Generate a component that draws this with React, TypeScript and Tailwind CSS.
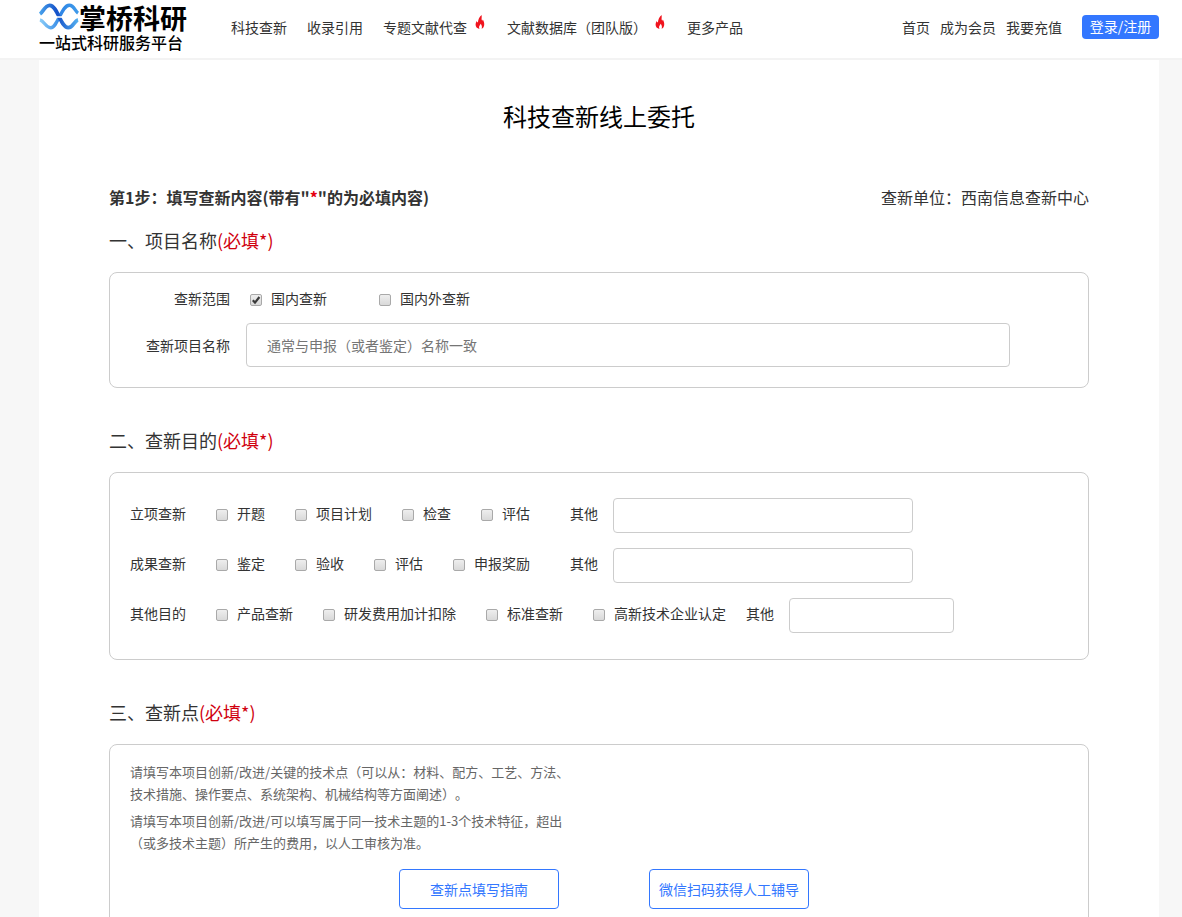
import React from "react";

function Wave() {
  return (
    <svg className="mt-0.5" width="41" height="29" viewBox="0 0 41 29" fill="none" aria-hidden="true">
      <defs>
        <linearGradient id="wa" x1="0" y1="0" x2="41" y2="0" gradientUnits="userSpaceOnUse">
          <stop offset="0" stopColor="#4aa6ee" />
          <stop offset="0.45" stopColor="#1450c8" />
          <stop offset="1" stopColor="#56b4f2" />
        </linearGradient>
        <linearGradient id="wb" x1="0" y1="0" x2="41" y2="0" gradientUnits="userSpaceOnUse">
          <stop offset="0" stopColor="#8fd0f8" />
          <stop offset="0.55" stopColor="#2f86e6" />
          <stop offset="1" stopColor="#3f9bea" />
        </linearGradient>
      </defs>
      <path d="M1 18C5 19 7 26 12 26C19 26 23 3 31 3C36 3 37 9 40 11" stroke="url(#wb)" strokeWidth="3.4" />
      <path d="M1 12C4 10 6 3 11 3C19 3 22 26 30 26C35 26 36 19 40 18" stroke="url(#wa)" strokeWidth="3.8" />
      <path d="M0 15H41" stroke="#fff" strokeWidth="1.4" />
    </svg>
  );
}

function Flame() {
  return (
    <svg className="-mt-0.5" width="12" height="14" viewBox="0 0 12 14" aria-hidden="true">
      <path
        d="M6.6 0C7 2.4 6.2 3.8 6.9 5.2C7.3 6 7.8 5.4 7.8 4.4C8.8 6.2 9.5 8.1 9.2 10C9 12 8 13.2 6.6 13.7C7.3 11.9 6.9 10.2 5.7 8.7C5.3 9.9 4.3 10.6 4.1 11.8C4 12.5 4.1 13.3 4.5 14C2 13.6 0.5 11.9 0.6 9.6C0.6 8.1 1.3 6.9 1.8 6C2 6.8 2.3 7.3 2.9 7.5C3.2 4.6 4.3 1.9 6.6 0Z"
        fill="#f0141e"
      />
    </svg>
  );
}

function Check({ label, checked = false }: { label: string; checked?: boolean }) {
  return (
    <label className="flex items-center gap-[9px] whitespace-nowrap">
      <span className="relative mt-1 flex size-3">
        <input
          type="checkbox"
          defaultChecked={checked}
          className="peer size-3 appearance-none rounded-xs border border-[#a9a9a9] bg-linear-to-b from-[#eeeeee] to-[#d9d9d9]"
        />
        <svg
          viewBox="0 0 12 12"
          className="pointer-events-none absolute inset-0 hidden size-3 peer-checked:block"
          aria-hidden="true"
        >
          <path d="M2.8 6.2L5 8.6L9.4 3" fill="none" stroke="#3a3a3a" strokeWidth="2.2" />
        </svg>
      </span>
      {label}
    </label>
  );
}

function Heading({ children }: { children: React.ReactNode }) {
  return (
    <h2 className="text-lg leading-[26px]">
      {children}
      <span className="text-[#d0000e]">(必填*)</span>
    </h2>
  );
}

const box = "mt-[19px] rounded-lg border border-[#cccccc] px-5";

function PurposeRow({ title, items, wide = true }: { title: string; items: string[]; wide?: boolean }) {
  return (
    <div className="flex items-center" role="group" aria-label={title}>
      <span className="w-14 pb-1.5">{title}</span>
      <div className="ml-[30px] flex gap-[30px] pb-1.5">
        {items.map((item) => (
          <Check key={item} label={item} />
        ))}
      </div>
      <label className={wide ? "ml-10 flex items-center gap-[15px]" : "ml-5 flex items-center gap-[15px]"}>
        <span className="pb-1.5">其他</span>
        <input
          type="text"
          className={
            wide
              ? "h-[35px] w-[300px] rounded-sm border border-[#cccccc] px-2"
              : "h-[35px] w-[165px] rounded-sm border border-[#cccccc] px-2"
          }
        />
      </label>
    </div>
  );
}

export default function App() {
  return (
    <div className="min-h-screen bg-[#f7f7f7] font-['Noto_Sans_CJK_SC',sans-serif] text-sm text-[#333333] [text-spacing-trim:space-all]">
      <header className="border-b-2 border-[#f3f3f3] bg-white">
        <div className="mr-[23px] ml-[39px] flex h-[58px] items-center">
          <a href="#" className="flex h-full w-[148px] flex-col text-black">
            <span className="flex h-8 items-start">
              <Wave />
              <span className="mt-1 text-[27px] leading-7 font-bold whitespace-nowrap">掌桥科研</span>
            </span>
            <span className="text-base leading-5 font-medium whitespace-nowrap">一站式科研服务平台</span>
          </a>
          <nav className="ml-11 flex items-center gap-5 pb-1 whitespace-nowrap">
            <a href="#">科技查新</a>
            <a href="#">收录引用</a>
            <a href="#" className="flex items-start gap-2">
              专题文献代查
              <Flame />
            </a>
            <a href="#" className="flex items-start gap-2">
              文献数据库（团队版）
              <Flame />
            </a>
            <a href="#">更多产品</a>
          </nav>
          <div className="ml-auto flex items-center gap-2.5 pb-1 whitespace-nowrap">
            <a href="#">首页</a>
            <a href="#">成为会员</a>
            <a href="#">我要充值</a>
            <button type="button" className="ml-2.5 h-6 w-[77px] rounded-sm bg-[#3377ff] pb-0.5 leading-[22px] text-white">
              登录/注册
            </button>
          </div>
        </div>
      </header>

      <main className="mr-[23px] ml-[39px] bg-white px-[70px] pt-[38px] pb-10">
        <h1 className="text-center text-2xl leading-9 text-black">科技查新线上委托</h1>
        <div className="mt-[51px] mb-[18px] flex justify-between text-base leading-6">
          <p className="font-bold">
            第1步：填写查新内容(带有"<span className="text-[#e60012]">*</span>"的为必填内容)
          </p>
          <p>查新单位：西南信息查新中心</p>
        </div>

        <div>
          <Heading>一、项目名称</Heading>
          <section className={`${box} pt-3.5 pb-5`}>
            <div className="flex h-6 items-center pb-0.5" role="group" aria-label="查新范围">
              <span className="w-[100px] text-right">查新范围</span>
              <div className="ml-5 flex gap-[52px]">
                <Check label="国内查新" checked />
                <Check label="国内外查新" />
              </div>
            </div>
            <div className="mt-3 flex items-center gap-4">
              <label htmlFor="project" className="w-[100px] text-right">
                查新项目名称
              </label>
              <input
                id="project"
                type="text"
                placeholder="通常与申报（或者鉴定）名称一致"
                className="mr-[58px] h-11 flex-1 rounded-sm border border-[#cccccc] px-5 placeholder:text-[#757575]"
              />
            </div>
          </section>
        </div>

        <div className="mt-[39px]">
          <Heading>二、查新目的</Heading>
          <section className={`${box} flex flex-col gap-[15px] pt-[25px] pb-[26px]`}>
            <PurposeRow title="立项查新" items={["开题", "项目计划", "检查", "评估"]} />
            <PurposeRow title="成果查新" items={["鉴定", "验收", "评估", "申报奖励"]} />
            <PurposeRow
              title="其他目的"
              items={["产品查新", "研发费用加计扣除", "标准查新", "高新技术企业认定"]}
              wide={false}
            />
          </section>
        </div>

        <div className="mt-[39px]">
          <Heading>三、查新点</Heading>
          <section className={`${box} pt-4 pb-10`}>
            <div className="flex max-w-[440px] flex-col gap-[5px] text-[13px] leading-[22px] text-[#666666]">
              <p>
                请填写本项目创新/改进/关键的技术点（可以从：材料、配方、工艺、方法、技术措施、操作要点、系统架构、机械结构等方面阐述）。
              </p>
              <p>
                请填写本项目创新/改进/可以填写属于同一技术主题的1-3个技术特征，超出（或多技术主题）所产生的费用，以人工审核为准。
              </p>
            </div>
            <div className="mt-[15px] flex justify-center gap-[90px] pl-2.5 text-[#3377ff]">
              <button type="button" className="h-10 w-40 rounded-sm border border-[#3377ff]">
                查新点填写指南
              </button>
              <button type="button" className="h-10 w-40 rounded-sm border border-[#3377ff]">
                微信扫码获得人工辅导
              </button>
            </div>
          </section>
        </div>
      </main>
    </div>
  );
}
